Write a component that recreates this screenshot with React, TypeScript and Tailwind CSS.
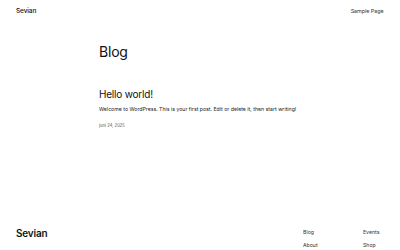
export default function App() {
  return (
    <div className="w-[400px] h-[250px] bg-white text-[#111111] flex flex-col overflow-hidden" style={{ fontFamily: 'Inter, "Noto Sans", sans-serif' }}>
      <header className="flex items-center justify-between px-4 pt-[7px] h-[16px]">
        <div className="text-[6.5px] font-medium tracking-[-0.1px]">Sevian</div>
        <nav className="text-[5.4px] text-[#333] tracking-[-0.05px] pr-[0.5px]">Sample Page</nav>
      </header>
      <main className="pl-[99px] pt-[29px]">
        <h1 className="text-[14px] leading-none font-normal tracking-[-0.2px]">Blog</h1>
        <h2 className="mt-[30px] text-[10px] leading-none font-normal tracking-[-0.2px]">Hello world!</h2>
        <p className="mt-[8px] text-[5.2px] leading-none text-[#222]">Welcome to WordPress. This is your first post. Edit or delete it, then start writing!</p>
        <p className="mt-[11.5px] text-[4.2px] leading-none text-[#555]">juni 24, 2025</p>
      </main>
      <footer className="mt-auto flex justify-between items-start pl-4 pr-[17px] pb-[2px]">
        <div className="text-[10px] leading-none font-semibold tracking-[-0.2px]">Sevian</div>
        <div className="flex gap-[40px] text-[5.2px] leading-none text-[#333] pt-[2px]">
          <div className="flex flex-col gap-[7.3px] w-[20px]">
            <span>Blog</span>
            <span>About</span>
          </div>
          <div className="flex flex-col gap-[7.3px] w-[20px]">
            <span>Events</span>
            <span>Shop</span>
          </div>
        </div>
      </footer>
    </div>
  );
}
